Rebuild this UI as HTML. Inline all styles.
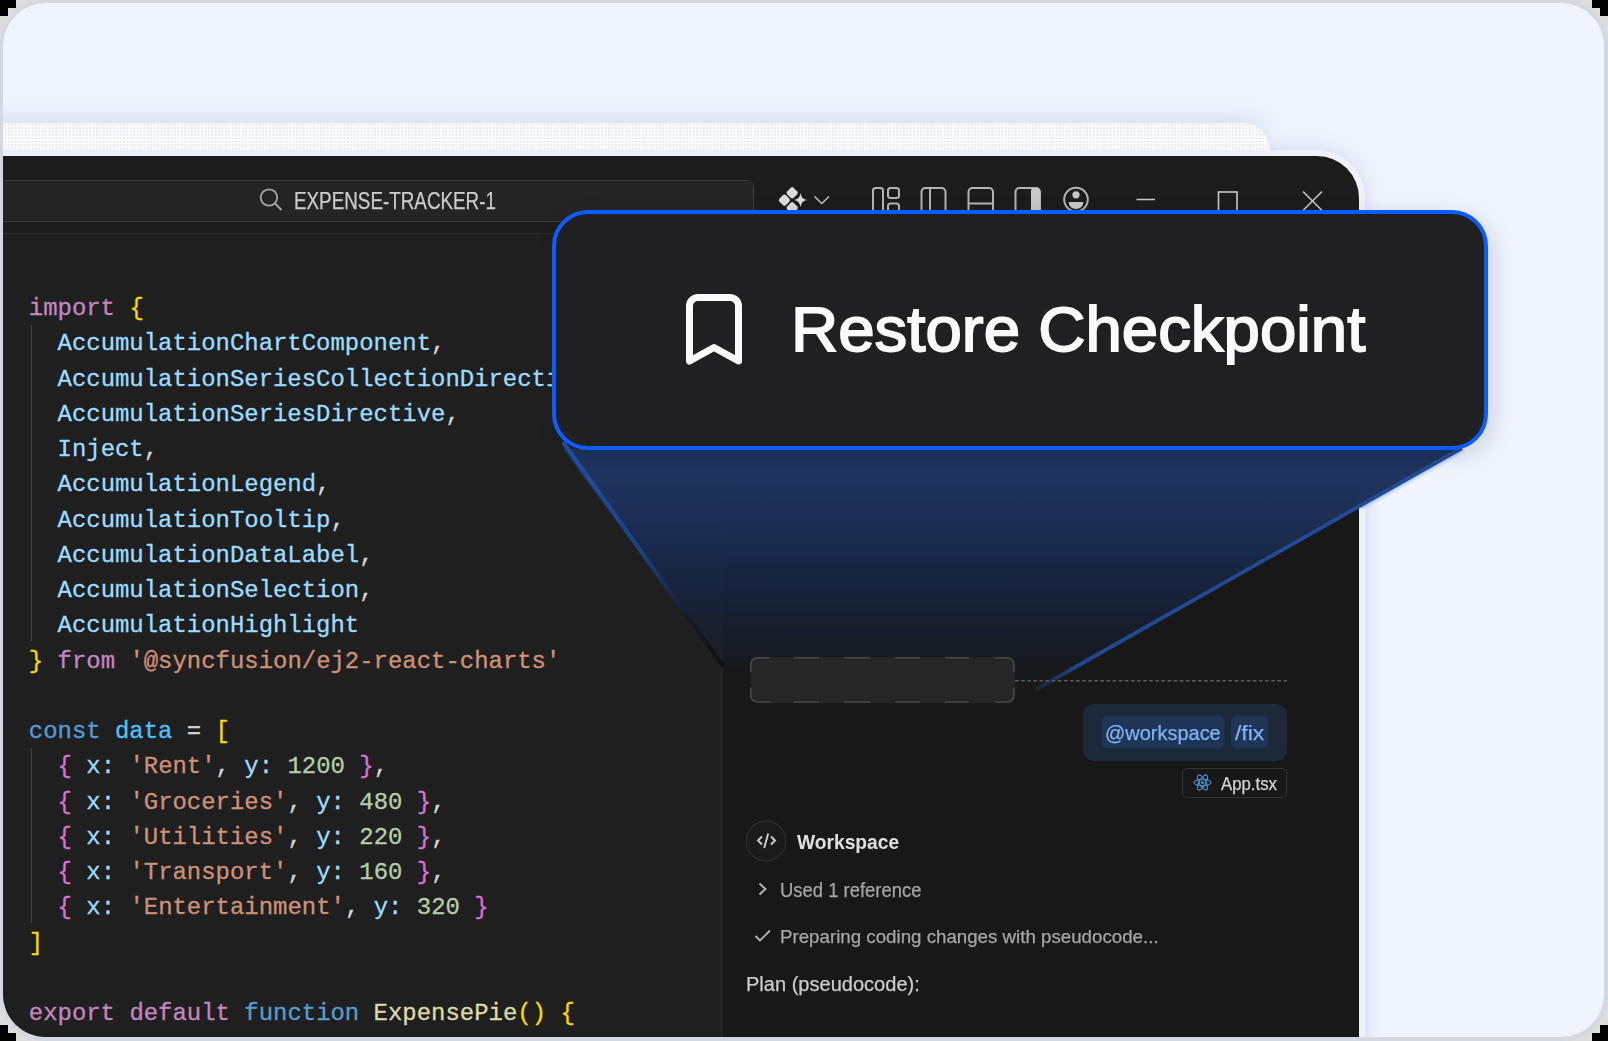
<!DOCTYPE html>
<html><head><meta charset="utf-8">
<style>
*{margin:0;padding:0;box-sizing:border-box}
html,body{width:1608px;height:1041px;overflow:hidden;background:#dcdcdc}
body{position:relative;font-family:"Liberation Sans",sans-serif}
.abs{position:absolute}
#frame{position:absolute;left:0;top:0;width:1608px;height:1041px;border-radius:46px;background:#d3d8e3;overflow:hidden}
#inner{position:absolute;left:3px;top:3px;width:1601px;height:1034px;border-radius:43px;background:#eff4fd;overflow:hidden}
#page{position:absolute;left:-3px;top:-3px;width:1608px;height:1041px}
#backcard{position:absolute;left:-20px;top:123px;width:1290px;height:27px;border-radius:0 44px 0 0;background:#fcfdff radial-gradient(circle,#e1e5ee 0.8px,transparent 1.1px) 0 0/3.4px 3.4px;box-shadow:0 -6px 18px rgba(170,190,225,.35)}
#win{position:absolute;left:-20px;top:150px;width:1385px;height:950px;border-radius:0 48px 0 0;background:#eef2fa;box-shadow:0 0 18px rgba(160,180,220,.45)}
#dark{position:absolute;left:0;top:156px;width:1359px;height:900px;border-radius:0 42px 0 0;background:#1c1c1c;overflow:hidden}
#code{position:absolute;left:28.8px;top:291px;font-family:"Liberation Mono",monospace;font-size:23.95px;-webkit-text-stroke:0.3px currentColor;line-height:35.25px;white-space:pre;color:#d4d4d4}
#code i{font-style:normal}
.kw{color:#c586c0}.id{color:#9cdcfe}.p{color:#d4d4d4}.y1{color:#ffd700}.pu{color:#da70d6}.bl{color:#569cd6}.cv{color:#4fc1ff}.str{color:#ce9178}.num{color:#b5cea8}.fn{color:#dcdcaa}
.guide{position:absolute;width:1px;background:#404040}
.tx{position:absolute;line-height:0;white-space:pre;transform-origin:0 0;-webkit-text-stroke:0.25px currentColor}
svg{position:absolute;overflow:visible}
#pop{position:absolute;left:552px;top:209.5px;width:936px;height:240.5px;border:4.6px solid #0d5cff;border-radius:36px;background:#202022;box-shadow:6px 6px 22px rgba(10,25,60,.14)}
</style></head>
<body>
<div class="abs" style="left:0;top:0;width:16px;height:8px;background:#000"></div><div class="abs" style="left:0;top:8px;width:8px;height:8px;background:#000"></div><div class="abs" style="right:0;top:0;width:16px;height:8px;background:#000"></div><div class="abs" style="right:0;top:8px;width:8px;height:8px;background:#000"></div><div class="abs" style="left:0;bottom:0;width:16px;height:8px;background:#000"></div><div class="abs" style="left:0;bottom:8px;width:8px;height:8px;background:#000"></div><div class="abs" style="right:0;bottom:0;width:16px;height:8px;background:#000"></div><div class="abs" style="right:0;bottom:8px;width:8px;height:8px;background:#000"></div>
<div id="frame"><div id="inner"><div id="page">
  <div id="win"></div>
  <div id="backcard"></div>
  <div id="dark">
    <div class="abs" style="left:-10px;top:24px;width:764px;height:42px;background:#242424;border:1px solid #3c3c3c;border-radius:7px"></div>
    <div class="abs" style="left:0;top:77px;width:1359px;height:1px;background:#2b2b2b"></div>
    <div class="abs" style="left:0;top:78px;width:722px;height:820px;background:#1f1f1f"></div>
    <div class="abs" style="left:720px;top:78px;width:3px;height:820px;background:#222222"></div>
    <div class="abs" style="left:723px;top:78px;width:636px;height:820px;background:#181818"></div>
  </div>
  <!-- title bar icons -->
  <svg width="1608" height="1041" style="left:0;top:0" viewBox="0 0 1608 1041">
    <g fill="none" stroke="#a8a8a8" stroke-width="1.8">
      <circle cx="269" cy="197.5" r="8.2"/>
      <line x1="275" y1="203.5" x2="281.5" y2="210"/>
    </g>
    <g fill="#dcdcdc">
      <rect x="787.60" y="188.20" width="9.2" height="9.2" rx="2.3" transform="rotate(45 792.2 192.8)"/>
      <rect x="779.80" y="195.60" width="9.2" height="9.2" rx="2.3" transform="rotate(45 784.4 200.2)"/>
      <rect x="787.60" y="203.20" width="9.2" height="9.2" rx="2.3" transform="rotate(45 792.2 207.8)"/>
      <path d="M800.5 193 Q801.3 199.2 807 200 Q801.3 200.8 800.5 207 Q799.7 200.8 794 200 Q799.7 199.2 800.5 193Z"/>
    </g>
    <g fill="none" stroke="#c4c4c4" stroke-width="1.5">
      <polyline points="814.5,196.5 821.8,203.5 829,196.5"/>
    </g>
    <g fill="none" stroke="#b4b4b4" stroke-width="2">
      <rect x="873" y="188" width="10" height="30" rx="2.5"/>
      <rect x="888" y="188" width="11" height="10" rx="2.5"/>
      <rect x="888" y="203.5" width="11" height="14" rx="2.5"/>
      <rect x="921.5" y="188" width="24" height="30" rx="4"/>
      <line x1="930" y1="188" x2="930" y2="218"/>
      <rect x="968.5" y="188" width="24.5" height="30" rx="4"/>
      <line x1="968.5" y1="203.5" x2="993" y2="203.5"/>
      <rect x="1015.5" y="188" width="24.5" height="30" rx="4"/>
      <circle cx="1076" cy="199.5" r="11.8"/>
    </g>
    <g fill="#c8c8c8">
      <rect x="1031" y="188" width="9" height="30" rx="3"/>
      <circle cx="1076" cy="194.8" r="3.6"/>
      <path d="M1068.8 202 h14.4 v1 a7.2 6 0 0 1 -14.4 0 z"/>
    </g>
    <g fill="none" stroke="#c8c8c8" stroke-width="1.6">
      <line x1="1136.5" y1="199.5" x2="1155" y2="199.5"/>
      <rect x="1218.5" y="192" width="18.5" height="20"/>
      <line x1="1303" y1="191.5" x2="1322" y2="210.5"/>
      <line x1="1322" y1="191.5" x2="1303" y2="210.5"/>
    </g>
  </svg>
  <div class="guide" style="left:31px;top:325px;height:316px"></div>
  <div class="guide" style="left:31px;top:748px;height:175px"></div>
  <div id="code"><i class="kw">import</i> <i class="y1">{</i>
  <i class="id">AccumulationChartComponent</i><i class="p">,</i>
  <i class="id">AccumulationSeriesCollectionDirective</i><i class="p">,</i>
  <i class="id">AccumulationSeriesDirective</i><i class="p">,</i>
  <i class="id">Inject</i><i class="p">,</i>
  <i class="id">AccumulationLegend</i><i class="p">,</i>
  <i class="id">AccumulationTooltip</i><i class="p">,</i>
  <i class="id">AccumulationDataLabel</i><i class="p">,</i>
  <i class="id">AccumulationSelection</i><i class="p">,</i>
  <i class="id">AccumulationHighlight</i>
<i class="y1">}</i> <i class="kw">from</i> <i class="str">'@syncfusion/ej2-react-charts'</i>

<i class="bl">const</i> <i class="cv">data</i> <i class="p">=</i> <i class="y1">[</i>
  <i class="pu">{</i> <i class="id">x</i><i class="id">:</i> <i class="str">'Rent'</i><i class="p">,</i> <i class="id">y</i><i class="id">:</i> <i class="num">1200</i> <i class="pu">}</i><i class="p">,</i>
  <i class="pu">{</i> <i class="id">x</i><i class="id">:</i> <i class="str">'Groceries'</i><i class="p">,</i> <i class="id">y</i><i class="id">:</i> <i class="num">480</i> <i class="pu">}</i><i class="p">,</i>
  <i class="pu">{</i> <i class="id">x</i><i class="id">:</i> <i class="str">'Utilities'</i><i class="p">,</i> <i class="id">y</i><i class="id">:</i> <i class="num">220</i> <i class="pu">}</i><i class="p">,</i>
  <i class="pu">{</i> <i class="id">x</i><i class="id">:</i> <i class="str">'Transport'</i><i class="p">,</i> <i class="id">y</i><i class="id">:</i> <i class="num">160</i> <i class="pu">}</i><i class="p">,</i>
  <i class="pu">{</i> <i class="id">x</i><i class="id">:</i> <i class="str">'Entertainment'</i><i class="p">,</i> <i class="id">y</i><i class="id">:</i> <i class="num">320</i> <i class="pu">}</i>
<i class="y1">]</i>

<i class="kw">export</i> <i class="kw">default</i> <i class="bl">function</i> <i class="fn">ExpensePie</i><i class="y1">()</i> <i class="y1">{</i>
</div>

  <!-- spotlight -->
  <svg width="1608" height="1041" style="left:0;top:0" viewBox="0 0 1608 1041">
    <defs>
      <linearGradient id="spg" x1="0" y1="449" x2="0" y2="692" gradientUnits="userSpaceOnUse">
        <stop offset="0" stop-color="#1d3159"/>
        <stop offset="0.1" stop-color="#1f345f"/>
        <stop offset="0.4" stop-color="#192a4d" stop-opacity="0.97"/>
        <stop offset="0.65" stop-color="#16223c" stop-opacity="0.8"/>
        <stop offset="0.85" stop-color="#151c2a" stop-opacity="0.5"/>
        <stop offset="1" stop-color="#15181e" stop-opacity="0"/>
      </linearGradient>
      <linearGradient id="lg1" x1="563" y1="442" x2="723" y2="666" gradientUnits="userSpaceOnUse">
        <stop offset="0" stop-color="#2250a8"/>
        <stop offset="0.5" stop-color="#1c3f80"/>
        <stop offset="0.8" stop-color="#121a2a"/>
        <stop offset="1" stop-color="#0f0f10"/>
      </linearGradient>
      <linearGradient id="lg2" x1="1462" y1="448" x2="1035" y2="690" gradientUnits="userSpaceOnUse">
        <stop offset="0" stop-color="#234c98"/>
        <stop offset="0.9" stop-color="#224891"/>
        <stop offset="1" stop-color="#1a3566" stop-opacity="0.4"/>
      </linearGradient>
      <filter id="glow" x="-20%" y="-20%" width="140%" height="140%"><feGaussianBlur stdDeviation="1.2"/></filter>
    </defs>
    <polygon points="563,449 1462,449 1035,692 723,666" fill="url(#spg)"/>
    <clipPath id="cr"><rect x="1359" y="440" width="200" height="100"/></clipPath>
    <line x1="1462" y1="448" x2="1035" y2="690" stroke="#8fb0ee" stroke-width="3" opacity="0.6" filter="url(#glow)" transform="translate(1.5,2)" clip-path="url(#cr)"/>
    <line x1="563" y1="442" x2="723" y2="666" stroke="url(#lg1)" stroke-width="4"/>
    <line x1="1462" y1="448" x2="1035" y2="690" stroke="url(#lg2)" stroke-width="3.8"/>
  </svg>

  <!-- chat panel -->
  <div class="abs" style="left:750.5px;top:657px;width:264px;height:45.5px;background:#262627;border-radius:7px"></div>
  <svg width="1608" height="1041" style="left:0;top:0" viewBox="0 0 1608 1041">
    <path d="M750.8 672.3 V664.3 A6.5 6.5 0 0 1 757.3 657.8 H769.8 M994.8 657.8 H1007.3 A6.5 6.5 0 0 1 1013.8 664.3 V672.3 M1013.8 687.5 V695.5 A6.5 6.5 0 0 1 1007.3 702 H994.8 M769.8 702 H757.3 A6.5 6.5 0 0 1 750.8 695.5 V687.5 M794 657.8 H819 M794 702 H819 M844 657.8 H870 M844 702 H870 M895 657.8 H920 M895 702 H920 M945 657.8 H969 M945 702 H969" fill="none" stroke="#474747" stroke-width="1.6"/>
    <line x1="1015" y1="680.8" x2="1288" y2="680.8" stroke="#595959" stroke-width="1.5" stroke-dasharray="3.7 2.4"/>
  </svg>
  <div class="abs" style="left:1083px;top:704px;width:204px;height:56.5px;background:#1b2939;border-radius:11px"></div>
  <div class="abs" style="left:1101.5px;top:716px;width:122.5px;height:31.5px;background:#1f3557;border-radius:5px"></div>
  <div class="abs" style="left:1231px;top:716px;width:37px;height:31.5px;background:#1f3557;border-radius:5px"></div>
  <div class="abs" style="left:1182px;top:768px;width:105px;height:30px;border:1px solid #333;border-radius:5px"></div>
  <svg width="1608" height="1041" style="left:0;top:0" viewBox="0 0 1608 1041">
    <g fill="none" stroke="#4f8dca" stroke-width="1.15">
      <ellipse cx="1202.5" cy="782.5" rx="8.5" ry="3.3"/>
      <ellipse cx="1202.5" cy="782.5" rx="8.5" ry="3.3" transform="rotate(60 1202.5 782.5)"/>
      <ellipse cx="1202.5" cy="782.5" rx="8.5" ry="3.3" transform="rotate(-60 1202.5 782.5)"/>
    </g>
    <circle cx="1202.5" cy="782.5" r="1.6" fill="#4f8dca"/>
    <circle cx="766" cy="841" r="19.8" fill="#1a1a1a" stroke="#2e2e2e" stroke-width="1.2"/>
    <g fill="none" stroke="#d0d0d0" stroke-width="1.9">
      <polyline points="762,836.5 758,840.5 762,844.5"/>
      <polyline points="771,836.5 775,840.5 771,844.5"/>
      <line x1="768.2" y1="833.5" x2="764.2" y2="848"/>
      <polyline points="759.5,883.5 765.5,889 759.5,894.5" stroke="#b4b4b4"/>
      <polyline points="755.5,936 760,940.5 770,930.5" stroke="#b4b4b4"/>
    </g>
  </svg>


  <!-- popover -->
  <div id="pop"></div>
  <svg width="1608" height="1041" style="left:0;top:0" viewBox="0 0 1608 1041">
    <path d="M689.5 361 V306 a8.5 8.5 0 0 1 8.5 -8.5 H730 a8.5 8.5 0 0 1 8.5 8.5 V361 L714 347.5 Z" fill="none" stroke="#fafafa" stroke-width="7" stroke-linejoin="round"/>
  </svg>
  <div id="poptext"><div class="tx" style="left:790.77px;top:329.10px;font-size:63.77px;font-weight:400;color:#fafafa;transform:scaleX(1.0257);-webkit-text-stroke:1.8px currentColor">Restore Checkpoint</div>
<div class="tx" style="left:293.89px;top:201.02px;font-size:23.04px;font-weight:400;color:#cccccc;transform:scaleX(0.8176);">EXPENSE-TRACKER-1</div>
<div class="tx" style="left:797.20px;top:842.32px;font-size:19.86px;font-weight:700;color:#e0e0e0;transform:scaleX(0.9672);-webkit-text-stroke:0">Workspace</div>
<div class="tx" style="left:779.82px;top:890.42px;font-size:19.57px;font-weight:400;color:#a6a6a6;transform:scaleX(0.9423);">Used 1 reference</div>
<div class="tx" style="left:779.70px;top:937.07px;font-size:19.13px;font-weight:400;color:#a6a6a6;transform:scaleX(0.9790);">Preparing coding changes with pseudocode...</div>
<div class="tx" style="left:746.10px;top:983.57px;font-size:20.00px;font-weight:400;color:#cccccc;transform:scaleX(1.0018);">Plan (pseudocode):</div>
<div class="tx" style="left:1105.10px;top:732.82px;font-size:21.01px;font-weight:400;color:#80b4f4;transform:scaleX(0.9509);">@workspace</div>
<div class="tx" style="left:1235.00px;top:732.82px;font-size:21.01px;font-weight:400;color:#80b4f4;transform:scaleX(1.0866);">/fix</div>
<div class="tx" style="left:1221.40px;top:784.27px;font-size:18.84px;font-weight:400;color:#d6d6d6;transform:scaleX(0.8907);">App.tsx</div></div>
</div></div></div>
</body></html>
